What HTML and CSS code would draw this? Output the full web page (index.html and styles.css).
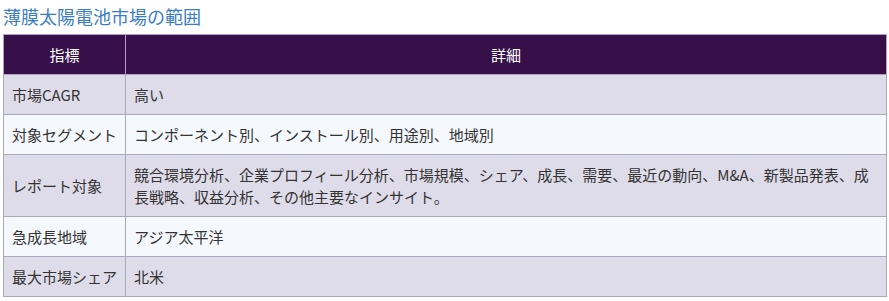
FILE: index.html
```html
<!DOCTYPE html>
<html lang="ja">
<head>
<meta charset="utf-8">
<link rel="stylesheet" href="styles.css">
</head>
<body>
<h3 class="title">薄膜太陽電池市場の範囲</h3>
<table class="scope">
  <colgroup><col class="c1"><col class="c2"></colgroup>
  <thead>
    <tr><th>指標</th><th>詳細</th></tr>
  </thead>
  <tbody>
    <tr><td class="key">市場CAGR</td><td>高い</td></tr>
    <tr><td class="key">対象セグメント</td><td>コンポーネント別、インストール別、用途別、地域別</td></tr>
    <tr><td class="key">レポート対象</td><td>競合環境分析、企業プロフィール分析、市場規模、シェア、成長、需要、最近の動向、M&amp;A、新製品発表、成長戦略、収益分析、その他主要なインサイト。</td></tr>
    <tr><td class="key">急成長地域</td><td>アジア太平洋</td></tr>
    <tr><td class="key">最大市場シェア</td><td>北米</td></tr>
  </tbody>
</table>
</body>
</html>
```
FILE: styles.css
```css
html, body {
  margin: 0;
  padding: 0;
  background: #ffffff;
}
body {
  padding: 0 3px 0 3px;
  font-family: "Noto Sans CJK JP", "Noto Sans", sans-serif;
  color: #333333;
}
.title {
  margin: 0;
  padding: 4px 0 0 0;
  height: 34px;
  box-sizing: border-box;
  font-size: 18px;
  line-height: 24px;
  font-weight: normal;
  color: #3a7dc0;
}
.scope {
  width: 884px;
  border-collapse: collapse;
  font-size: 15px;
  line-height: 22px;
}
.c1 { width: 122px; }
.scope th {
  background: #37104a;
  color: #ffffff;
  font-weight: normal;
  text-align: center;
  padding: 9px 8px 8px;
  border: 1px solid #b49fca;
  height: 22px;
}
.scope td {
  padding: 9px 8px 8px;
  border: 1px solid #aaa8bc;
  vertical-align: middle;
}
.scope td.key { white-space: nowrap; }
.scope tbody tr:nth-child(odd) td { background: #dfdcea; }
.scope tbody tr:nth-child(even) td { background: #f5f8fc; }
```
